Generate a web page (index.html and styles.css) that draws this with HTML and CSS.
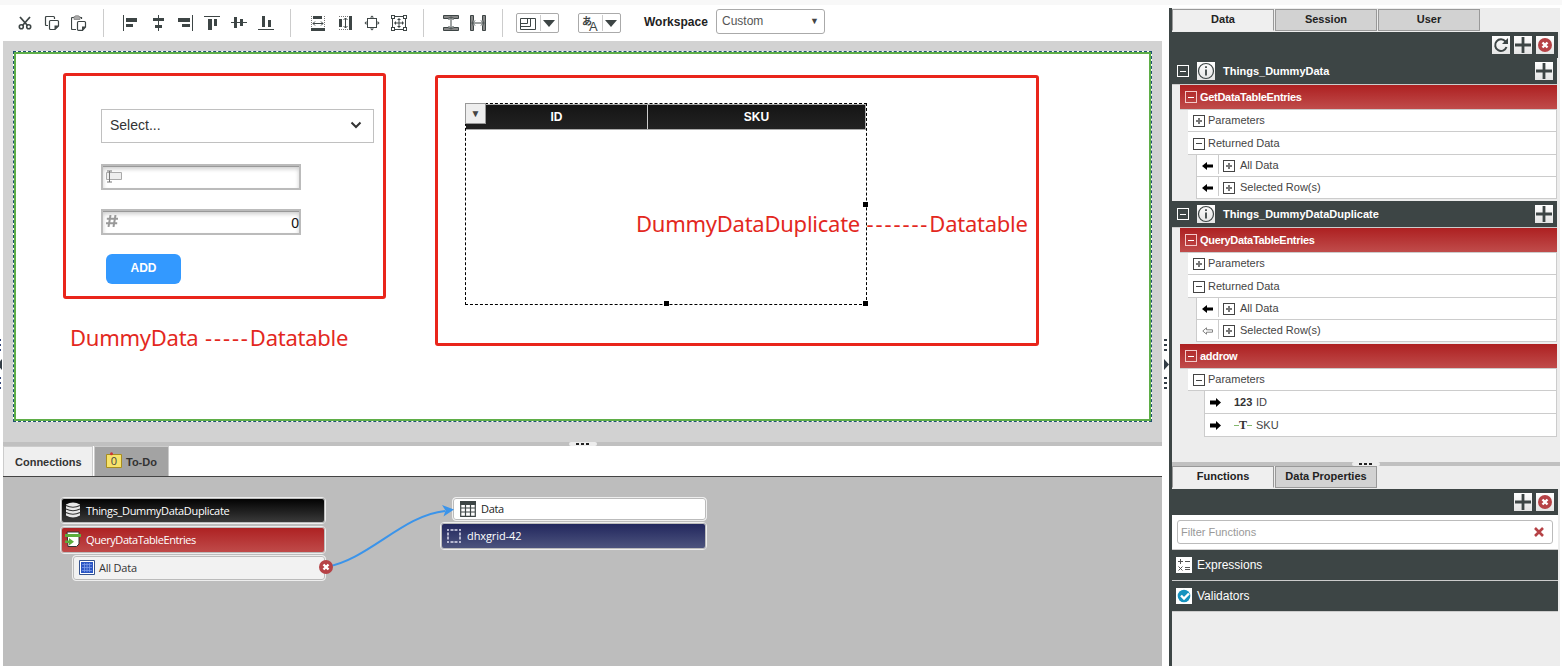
FILE: index.html
```
<!DOCTYPE html>
<html lang="en">
<head>
    <meta charset="UTF-8">
    <meta name="viewport" content="width=device-width, initial-scale=1.0">
    <title>Mashup Builder</title>
    <link rel="stylesheet" href="styles.css">
</head>
<body>
    <!-- shared icons -->
    <svg class="sprite" width="0" height="0">
        <symbol id="plus" viewBox="0 0 18 18"><path d="M9 1v16M1 9h16" stroke="#3d4545" stroke-width="2.800"/></symbol>
        <symbol id="close" viewBox="0 0 18 18"><circle cx="9" cy="9" r="7" fill="#b64246"/><path d="M6.500 6.500l5 5M11.500 6.500l-5 5" stroke="#fff" stroke-width="2.400"/></symbol>
        <symbol id="info" viewBox="0 0 18 18"><circle cx="9" cy="9" r="7.500" fill="none" stroke="#3d4545" stroke-width="1.200"/><path d="M9 7.500v6M9 4.200v1.800" stroke="#3d4545" stroke-width="1.800"/></symbol>
        <symbol id="arrow-left" viewBox="0 0 11 8"><path d="M0 4L5 0v2.500h6v3H5V8z"/></symbol>
        <symbol id="arrow-right" viewBox="0 0 11 9"><path d="M11 4.500L6 0v2.500H0v4h6V9z"/></symbol>
    </svg>

    <div class="top-strip"></div>
    <div class="builder">
        <div class="gutter left-gutter">
            <span class="dots"></span>
            <span class="arrow"></span>
            <span class="dots"></span>
        </div>

        <main class="main">
            <div class="toolbar">
                <div class="tools">
                    <svg class="tool" viewBox="0 0 16 16"><path d="M3 2l7.500 8.500M13 2L5.500 10.500" fill="none" stroke="#3d4545" stroke-width="1.800"/><circle cx="4.300" cy="11.700" r="2" fill="none" stroke="#3d4545" stroke-width="1.600"/><circle cx="11.700" cy="11.700" r="2" fill="none" stroke="#3d4545" stroke-width="1.600"/></svg>
                    <svg class="tool" viewBox="0 0 16 16"><path d="M4 10.500H2.500Q1.500 10.500 1.500 9.500V2.500Q1.500 1.500 2.500 1.500H9.500Q10.500 1.500 10.500 2.500V4M6.500 5.500H13.500Q14.500 5.500 14.500 6.500V11L11 14.500H6.500Q5.500 14.500 5.500 13.500V6.500Q5.500 5.500 6.500 5.500Z" fill="none" stroke="#3d4545" stroke-width="1.200"/><path d="M15 10.500L10.500 15V10.500z" fill="#3d4545"/></svg>
                    <svg class="tool" viewBox="0 0 16 16"><path d="M5 14.500H1.500Q.5 14.500 .5 13.500V3.500Q.5 2.500 1.500 2.500H3M9 2.500H10.500V4" fill="none" stroke="#3d4545" stroke-width="1.200"/><path d="M3 1.500h1.500V.7h3v.8H9v3H3z" fill="#aaa" stroke="#888" stroke-width=".8"/><path d="M7.500 6.500H13.500Q14.500 6.500 14.500 7.500V12L11.500 15.300H7.500Q6.500 15.300 6.500 14.500V7.500Q6.500 6.500 7.500 6.500Z" fill="#fff" stroke="#3d4545" stroke-width="1.200"/><path d="M15 11.500L11 15.700V11.500z" fill="#3d4545"/></svg>
                </div>
                <div class="tools">
                    <svg class="tool" viewBox="0 0 16 16"><path d="M0 0h1v16H0zM3 3h11v4H3zM3 9h7v3H3z"/></svg>
                    <svg class="tool" viewBox="0 0 16 16"><path d="M8 0h1v16H8zM3 3h11v3H3zM5 10h7v3H5z"/></svg>
                    <svg class="tool" viewBox="0 0 16 16"><path d="M15 0h1v16h-1zM1 3h12v4H1zM5 9h8v3H5z"/></svg>
                    <svg class="tool" viewBox="0 0 16 16"><path d="M0 1h16v1H0zM4 4h4v11H4zM10 4h3v7h-3z"/></svg>
                    <svg class="tool" viewBox="0 0 16 16"><path d="M0 7h16v1H0zM3 2h3v11H3zM9 4h3v7H9z"/></svg>
                    <svg class="tool" viewBox="0 0 16 16"><path d="M0 14h16v1H0zM4 1h3v11H4zM10 5h3v7h-3z"/></svg>
                </div>
                <div class="tools">
                    <svg class="tool" viewBox="0 0 16 16"><path d="M3 1h9v3H3zM1 13h14v3H1z"/><path d="M1.500 1v11M14.500 1v11" class="dotted"/><path d="M3 8.500h10M5 6.500L3 8.500L5 10.500M11 6.500L13 8.500L11 10.500" class="thin"/></svg>
                    <svg class="tool" viewBox="0 0 16 16"><path d="M2 4h3v8H2zM12 1h3v14h-3z"/><path d="M2 1.500h10M2 14.500h10" class="dotted"/><path d="M8.500 3v10M6.500 5L8.500 3L10.500 5M6.500 11L8.500 13L10.500 11" class="thin"/></svg>
                    <svg class="tool" viewBox="0 0 16 16"><rect x="3.500" y="3.500" width="9" height="9" class="thin"/><path d="M6 2.500L8 .5l2 2zM6 13.500l2 2l2-2zM2.500 6L.5 8l2 2zM13.500 6l2 2l-2 2z"/></svg>
                    <svg class="tool" viewBox="0 0 16 16"><rect x="1.500" y="1.500" width="13" height="13" class="thin"/><path d="M0 0h4v4H0zM12 0h4v4h-4zM0 12h4v4H0zM12 12h4v4h-4z"/><path d="M1 1h2v2H1zM13 1h2v2h-2zM1 13h2v2H1zM13 13h2v2h-2z" fill="#fff"/><path d="M3 8l2-2v1.500h2.500V5H6l2-2l2 2H8.500v2.500H11V6l2 2l-2 2V8.500H8.500V11H10l-2 2l-2-2h1.500V8.500H5V10z"/></svg>
                </div>
                <div class="tools">
                    <svg class="tool" viewBox="0 0 16 16"><path d="M.5.500h15v3h-4.500Q8 .5 5 3.500H.5zM.5 12.500H5Q8 15.500 11 12.500h4.500v3H.5z" fill="#888" stroke="#3d4545"/><path d="M8 3v10M5.500 5L8 2.500L10.500 5M5.500 11L8 13.500L10.500 11" class="thin"/></svg>
                    <svg class="tool" viewBox="0 0 16 16"><path d="M.5.500h3V5Q.5 8 3.500 11v4.500H.5zM12.500.5h3v15h-3V11Q15.500 8 12.500 5z" fill="#888" stroke="#3d4545"/><path d="M3 8h10M5 5.500L2.500 8L5 10.500M11 5.500L13.500 8L11 10.500" class="thin"/></svg>
                </div>
                <button class="split-button">
                    <svg width="23" height="18" viewBox="0 0 23 18"><path d="M3.500 4.500h15v11h-15zM3.500 9.500h7v-5M3.500 12.500h10v-8" fill="none" stroke="#3d4545"/></svg>
                    <span class="caret"></span>
                </button>
                <button class="split-button">
                    <span class="lang"><span class="lang-ja">あ</span><span class="lang-en">A</span></span>
                    <span class="caret"></span>
                </button>
                <span class="workspace-label">Workspace</span>
                <div class="workspace-select">Custom<span class="select-arrow">▼</span></div>
            </div>

            <div class="canvas">
                <div class="mashup">
                    <div class="widgets">
                        <div class="dropdown">Select...
                            <svg width="12" height="8" viewBox="0 0 12 8"><path d="M1.500 1.500L6 6l4.500-4.500" fill="none" stroke="#333" stroke-width="2"/></svg>
                        </div>
                        <div class="field">
                            <svg width="16" height="14" viewBox="0 0 16 14"><path d="M.5 2.500h15v7H.5z" fill="#eee" stroke="#aaa"/><path d="M1 1h5M3.500 1v11M1 12h5" stroke="#777" fill="none"/></svg>
                        </div>
                        <div class="field number-field">
                            <svg width="12" height="12" viewBox="0 0 12 12"><path d="M4.500 0L2.500 12M9.500 0L7.500 12M.8 3.800H12M0 8.200H11.200" stroke="#999" stroke-width="2" fill="none"/></svg>
                            <span>0</span>
                        </div>
                        <button class="add-button">ADD</button>
                    </div>
                    <div class="note note-left">DummyData <span class="dashes">-----</span>Datatable</div>

                    <div class="grid-frame">
                        <div class="grid">
                            <div class="grid-head"><span class="col-id">ID</span><span class="col-sku">SKU</span></div>
                            <span class="grid-menu">▼</span>
                            <i class="handle handle-e"></i>
                            <i class="handle handle-s"></i>
                            <i class="handle handle-se"></i>
                        </div>
                    </div>
                    <div class="note note-right">DummyDataDuplicate <span class="dashes">-------</span>Datatable</div>
                </div>
            </div>

            <div class="splitter"><span class="grip"></span></div>
            <div class="tabs">
                <span class="tab active">Connections</span>
                <span class="tab todo">
                    <svg width="16" height="17" viewBox="0 0 16 17"><path d="M.5 2.500h15v13H.5z" fill="#f7e36b" stroke="#a88d20"/><circle cx="5.500" cy="1.800" r="1.500" fill="#c33"/><text x="8" y="13" text-anchor="middle" class="todo-count">0</text></svg>
                    To-Do
                </span>
            </div>

            <div class="diagram">
                <svg class="wire" width="160" height="80" viewBox="0 0 160 80">
                    <path d="M11 67C53 60 88 15 130 11" fill="none" stroke="#3b94ea" stroke-width="2"/>
                    <path d="M139 9.500L127 5l3.500 5.500L128.500 16.500z" fill="#3b94ea"/>
                </svg>
                <div class="node node-thing">
                    <svg width="16" height="16" viewBox="0 0 16 16"><path d="M1 2.500Q8-1.500 15 2.500V13.500Q8 17.500 1 13.500z" fill="#e8e8e8"/><path d="M1 3.500q7 3.500 14 0M1 7q7 3.500 14 0M1 10.500q7 3.500 14 0" fill="none" stroke="#333" stroke-width="1.200"/></svg>
                    Things_DummyDataDuplicate
                </div>
                <div class="node node-service">
                    <svg width="16" height="16" viewBox="0 0 16 16"><path d="M2 1h12v12l-2.500 2.500H3z" fill="#fff" stroke="#333"/><path d="M0 3h16v3H0zM0 9.500h4V7l5 3.800l-5 3.800v-2.500H0z" fill="#5cad3c"/></svg>
                    QueryDataTableEntries
                </div>
                <div class="node node-result">
                    <svg width="16" height="15" viewBox="0 0 16 15"><path d="M.5.500h15v14H.5z" fill="#fff" stroke="#35538f"/><path d="M2 2h12v11H2z" fill="#2b56c4"/><path d="M3 4.500h10M3 7.500h10M3 10.500h10M5.500 3v9M8 3v9M10.500 3v9" stroke="#7d9ce8" stroke-width=".8"/></svg>
                    All Data
                </div>
                <svg class="unlink" width="18" height="18"><use href="#close"/></svg>
                <div class="node node-data">
                    <svg width="16" height="16" viewBox="0 0 16 16"><path d="M.7.700h14.600v14.600H.7zM.7 7h14.600M.7 11h14.600M5.500 3v12.500M10.500 3v12.500" fill="none" stroke="#3d4545" stroke-width="1.200"/><path d="M0 0h16v4H0z" fill="#3d4545"/></svg>
                    Data
                </div>
                <div class="node node-widget">
                    <svg width="14" height="14" viewBox="0 0 14 14"><path d="M3.500 1h3M7.500 1h3M3.500 13h3M7.500 13h3M1 3.500v3M1 7.500v3M13 3.500v3M13 7.500v3M0 1h2M12 1h2M0 13h2M12 13h2" stroke="#dde" stroke-width="1.500"/></svg>
                    dhxgrid-42
                </div>
            </div>
        </main>

        <div class="gutter">
            <span class="dots"></span>
            <span class="arrow"></span>
            <span class="dots"></span>
        </div>

        <aside class="panel">
            <div class="panel-tabs">
                <span class="panel-tab active">Data</span>
                <span class="panel-tab">Session</span>
                <span class="panel-tab">User</span>
            </div>
            <div class="panel-bar">
                <svg class="bar-icon" viewBox="0 0 18 18"><path d="M13.500 5.500A5.800 5.800 0 1 0 14.500 11" fill="none" stroke="#3d4545" stroke-width="2"/><path d="M16 2v6h-6z" fill="#3d4545"/></svg>
                <svg class="bar-icon"><use href="#plus"/></svg>
                <svg class="bar-icon"><use href="#close"/></svg>
            </div>

            <div class="tree">
                <div class="entity">
                    <i class="toggle minus"></i>
                    <svg class="bar-icon"><use href="#info"/></svg>
                    <b>Things_DummyData</b>
                    <svg class="bar-icon add"><use href="#plus"/></svg>
                </div>
                <div class="service"><i class="toggle minus"></i>GetDataTableEntries</div>
                <div class="row"><i class="toggle plus"></i>Parameters</div>
                <div class="row tall"><i class="toggle minus"></i>Returned Data</div>
                <div class="row leaf"><span class="bind"><svg width="11" height="8"><use href="#arrow-left"/></svg></span><i class="toggle plus"></i>All Data</div>
                <div class="row leaf"><span class="bind"><svg width="11" height="8"><use href="#arrow-left"/></svg></span><i class="toggle plus"></i>Selected Row(s)</div>

                <div class="entity spaced">
                    <i class="toggle minus"></i>
                    <svg class="bar-icon"><use href="#info"/></svg>
                    <b>Things_DummyDataDuplicate</b>
                    <svg class="bar-icon add"><use href="#plus"/></svg>
                </div>
                <div class="service"><i class="toggle minus"></i>QueryDataTableEntries</div>
                <div class="row"><i class="toggle plus"></i>Parameters</div>
                <div class="row tall"><i class="toggle minus"></i>Returned Data</div>
                <div class="row leaf"><span class="bind"><svg width="11" height="8"><use href="#arrow-left"/></svg></span><i class="toggle plus"></i>All Data</div>
                <div class="row leaf"><span class="bind"><svg width="11" height="8" viewBox="0 0 11 8"><path d="M.8 4L4.500 .8v2h6v2.400h-6v2z" fill="#fff" stroke="#777" stroke-width=".9"/></svg></span><i class="toggle plus"></i>Selected Row(s)</div>

                <div class="service spaced"><i class="toggle minus"></i>addrow</div>
                <div class="row"><i class="toggle minus"></i>Parameters</div>
                <div class="row tall param"><svg width="11" height="9"><use href="#arrow-right"/></svg><b class="type">123</b>ID</div>
                <div class="row tall param"><svg width="11" height="9"><use href="#arrow-right"/></svg><b class="type type-text">T</b>SKU</div>
            </div>

            <div class="splitter"><span class="grip"></span></div>
            <div class="panel-tabs lower">
                <span class="panel-tab active">Functions</span>
                <span class="panel-tab">Data Properties</span>
            </div>
            <div class="panel-bar">
                <svg class="bar-icon"><use href="#plus"/></svg>
                <svg class="bar-icon"><use href="#close"/></svg>
            </div>
            <div class="filter">
                <div class="filter-input">Filter Functions
                    <svg width="10" height="10" viewBox="0 0 10 10"><path d="M1 1l8 8M9 1L1 9" stroke="#b64246" stroke-width="2.600"/></svg>
                </div>
            </div>
            <div class="function">
                <svg width="16" height="16" viewBox="0 0 16 16"><path d="M0 0h16v16H0z" fill="#fff"/><path d="M2 4.500h5M4.500 2v5M9 4.500h5M9 10.500h5M9 12.500h5M2.500 9.500l4 4M6.500 9.500l-4 4" stroke="#555" fill="none"/></svg>
                Expressions
            </div>
            <div class="function">
                <svg width="16" height="16" viewBox="0 0 16 16"><path d="M0 0h16v16H0z" fill="#fff"/><circle cx="8" cy="8" r="6.300" fill="#1593bf"/><path d="M5 7.500l3 3l5-5" fill="none" stroke="#fff" stroke-width="2.400"/></svg>
                Validators
            </div>
        </aside>
    </div>
</body>
</html>
```
FILE: styles.css
```
* {
    box-sizing: border-box;
}

body {
    margin: 0;
    height: 666px;
    overflow: hidden;
    background: #fff;
    font-family: "Liberation Sans", Arial, sans-serif;
    font-size: 11px;
    color: #333;
}

svg {
    display: block;
    flex-shrink: 0;
}

.top-strip {
    height: 5px;
    background: #f8f8f8;
}

.builder {
    display: flex;
    height: 661px;
}

/* side gutters */
.gutter {
    width: 7px;
    flex-shrink: 0;
    padding: 334px 0 0 2px;
}

.left-gutter {
    width: 3px;
    padding-left: 0;
}

.dots {
    display: block;
    width: 3px;
    height: 13px;
    background: repeating-linear-gradient(#333d46 0, #333d46 2px, transparent 2px, transparent 5px);
}

.left-gutter .dots {
    width: 1px;
    background: repeating-linear-gradient(#35467a 0, #35467a 2px, transparent 2px, transparent 5px);
}

.arrow {
    display: block;
    width: 5px;
    height: 11px;
    margin: 7px 0;
    background: #333d46;
    clip-path: polygon(0 0, 100% 50%, 0 100%);
}

.left-gutter .arrow {
    width: 2px;
    clip-path: polygon(0 20%, 100% 0, 100% 100%, 0 80%);
}

.main {
    width: 1159px;
    display: flex;
    flex-direction: column;
}

/* toolbar */
.toolbar {
    height: 36px;
    padding-left: 14px;
    display: flex;
    align-items: center;
}

.tools {
    display: flex;
    align-items: center;
    gap: 11px;
    height: 28px;
    padding-right: 16px;
    margin-right: 19px;
    border-right: 1px solid #ccc;
}

.tools:nth-child(4) {
    margin-right: 13px;
}

.tool {
    width: 16px;
    height: 16px;
    fill: #3d4545;
}

.thin {
    fill: none;
    stroke: #3d4545;
    stroke-width: 1;
}

.dotted {
    fill: none;
    stroke: #777;
    stroke-dasharray: 1 1;
}

.split-button {
    display: flex;
    align-items: center;
    width: 43px;
    height: 20px;
    margin: 0 19px 0 0;
    padding: 0;
    background: #fff;
    border: 1px solid #aaa;
    border-radius: 2px;
}

.caret {
    width: 18px;
    height: 16px;
    border-left: 1px solid #ccc;
}

.caret::before {
    content: "";
    display: block;
    width: 12px;
    height: 7px;
    margin: 5px 0 0 2px;
    background: #3d4545;
    clip-path: polygon(0 0, 100% 0, 50% 100%);
}

.lang {
    display: flex;
    width: 23px;
    height: 18px;
    padding-left: 3px;
    font-family: "Liberation Sans", "Noto Sans CJK JP", sans-serif;
    color: #3d4545;
    line-height: 11px;
}

.lang-ja {
    font-size: 10px;
    font-weight: bold;
    padding-top: 2px;
}

.lang-en {
    font-size: 13px;
    margin-left: -3px;
    padding-top: 7px;
}

.workspace-label {
    margin-left: 4px;
    width: 72px;
    padding-bottom: 3px;
    font-size: 12px;
    font-weight: bold;
    color: #222;
}

.workspace-select {
    display: flex;
    align-items: center;
    justify-content: space-between;
    width: 109px;
    height: 25px;
    margin-top: -3px;
    padding: 0 5px 2px;
    border: 1px solid #aaa;
    border-radius: 3px;
    font-size: 12px;
    color: #555;
}

.select-arrow {
    font-size: 9px;
    line-height: 12px;
    color: #444;
}

/* design canvas */
.canvas {
    height: 401px;
    padding: 10px;
    background: #d2d2d2;
}

.mashup {
    position: relative;
    width: 1139px;
    height: 371px;
    background: #fff;
    border: 1px dashed #1f5570;
    box-shadow: inset 0 0 0 2px #5fae48;
}

.widgets {
    position: absolute;
    left: 49px;
    top: 21px;
    width: 323px;
    height: 226px;
    padding: 33px 0 0 35px;
    border: 3px solid #e9251b;
    border-radius: 3px;
}

.dropdown {
    display: flex;
    align-items: center;
    justify-content: space-between;
    width: 273px;
    height: 34px;
    padding: 0 11px 2px 8px;
    border: 1px solid #c0c0c0;
    font-size: 14px;
}

.field {
    display: flex;
    justify-content: space-between;
    width: 200px;
    height: 26px;
    margin-top: 21px;
    padding: 4px 3px;
    border: 2px solid #bbb;
    box-shadow: inset 0 1px 0 #999, inset 0 3px 4px #ccc;
}

.number-field {
    margin-top: 19px;
    padding: 4px 0 0 3px;
    font-size: 14px;
    color: #111;
}

.add-button {
    display: block;
    width: 75px;
    height: 30px;
    margin: 19px 0 0 5px;
    padding: 0 0 2px;
    background: #3399ff;
    border: 0;
    border-radius: 6px;
    font: bold 12px "Liberation Sans", Arial, sans-serif;
    color: #fff;
}

.note {
    position: absolute;
    font-family: "Noto Sans", sans-serif;
    font-size: 22px;
    line-height: 30px;
    letter-spacing: -0.25px;
    white-space: nowrap;
    color: #e3281e;
}

.dashes {
    margin-left: 1px;
    letter-spacing: 1.9px;
}

.note-left {
    left: 56px;
    top: 270px;
}

.note-right {
    left: 622px;
    top: 156px;
}

.grid-frame {
    position: absolute;
    left: 421px;
    top: 23px;
    width: 604px;
    height: 271px;
    padding: 25px 27px;
    border: 3px solid #e9251b;
    border-radius: 3px;
}

.grid {
    position: relative;
    width: 402px;
    height: 202px;
    border: 1px dashed #000;
}

.grid-head {
    display: flex;
    height: 26px;
    line-height: 25px;
    background: linear-gradient(#151515, #222);
    border: 1px solid #aaa;
    border-width: 1px 1px 1px 0;
    color: #fff;
    font-size: 12px;
    font-weight: bold;
    text-align: center;
}

.col-id {
    width: 182px;
    border-right: 1px solid #ccc;
}

.col-sku {
    flex: 1;
}

.grid-menu {
    position: absolute;
    left: -1px;
    top: -1px;
    width: 21px;
    height: 21px;
    line-height: 19px;
    background: #eee;
    border: 1px solid #999;
    font-size: 10px;
    text-align: center;
    color: #444;
}

.handle {
    position: absolute;
    width: 5px;
    height: 5px;
    background: #000;
}

.handle-e {
    right: -2px;
    top: 98px;
}

.handle-s {
    left: 198px;
    bottom: -2px;
}

.handle-se {
    right: -2px;
    bottom: -2px;
}

.splitter {
    display: flex;
    justify-content: center;
    height: 4px;
    flex-shrink: 0;
    background: #c0c0c0;
}

.grip {
    width: 28px;
    height: 4px;
    padding: 1px 7px;
    background: #ededed;
    border-radius: 2px;
}

.grip::before {
    content: "";
    display: block;
    width: 13px;
    height: 2px;
    background: repeating-linear-gradient(90deg, #222 0, #222 3px, transparent 3px, transparent 5px);
}

/* connections */
.tabs {
    display: flex;
    gap: 1px;
    height: 31px;
    border-bottom: 1px solid #444;
}

.tab {
    display: flex;
    align-items: center;
    width: 90px;
    padding: 1px 0 0 11px;
    background: #efefef;
    border: 1px solid #ccc;
    border-bottom: 0;
    font-weight: bold;
}

.todo {
    width: 75px;
    gap: 4px;
    padding-left: 11px;
    background: #a3a3a3;
}

.todo svg {
    margin-top: -3px;
}

.todo-count {
    font: 11px "Open Sans", sans-serif;
    fill: #444;
}

.diagram {
    position: relative;
    flex: 1;
    background: #bdbdbd;
    font-family: "Open Sans", "Noto Sans", sans-serif;
}

.wire {
    position: absolute;
    left: 312px;
    top: 23px;
    z-index: 1;
}

.unlink {
    position: absolute;
    left: 314px;
    top: 81px;
    z-index: 2;
}

.node {
    position: absolute;
    left: 57px;
    width: 266px;
    height: 27px;
    padding: 0 0 1px 4px;
    display: flex;
    align-items: center;
    gap: 5px;
    border: 1px solid #eee;
    border-radius: 4px;
    box-shadow: inset 0 0 0 1px #bbb;
    letter-spacing: -0.33px;
    color: #fff;
}

.node-thing {
    top: 20px;
    background: linear-gradient(#000, #3c3c3c);
}

.node-service {
    top: 49px;
    height: 28px;
    padding-bottom: 2px;
    background: linear-gradient(#ad2021, #c04c4b);
    letter-spacing: -0.43px;
}

.node-result {
    left: 69px;
    top: 78px;
    width: 254px;
    height: 26px;
    padding-left: 6px;
    gap: 4px;
    background: #f2f2f2;
    letter-spacing: -0.2px;
    color: #333;
}

.node-data {
    left: 449px;
    top: 20px;
    width: 255px;
    height: 24px;
    padding-left: 7px;
    background: #fff;
    color: #222;
}

.node-widget {
    left: 437px;
    top: 45px;
    width: 267px;
    height: 28px;
    padding-left: 6px;
    gap: 6px;
    background: linear-gradient(#20255c, #4e557f);
    letter-spacing: -0.1px;
}

/* right panel */
.panel {
    width: 391px;
    height: 658px;
    margin-top: 3px;
    background: #ededed;
    border-left: 3px solid #3d4545;
}

.panel-tabs {
    display: flex;
    gap: 1px;
    height: 24px;
    padding-top: 1px;
}

.panel-tabs.lower {
    height: 23px;
    padding-top: 0;
}

.panel-tab {
    width: 102px;
    height: 22px;
    line-height: 19px;
    background: #d2d2d2;
    border: 1px solid #999;
    font-weight: bold;
    text-align: center;
    color: #222;
}

.panel-tab.active {
    background: #efefef;
    border-bottom-color: #efefef;
}

.panel-bar {
    display: flex;
    align-items: center;
    justify-content: flex-end;
    gap: 4px;
    width: 386px;
    height: 26px;
    padding-right: 4px;
    background: #3d4545;
}

.bar-icon {
    width: 18px;
    height: 18px;
    background: linear-gradient(#fff, #e4e4e4);
}

.tree {
    height: 404px;
    width: 386px;
    padding-right: 1px;
}

.entity {
    display: flex;
    align-items: center;
    height: 27px;
    padding: 0 4px 0 5px;
    background: #3d4545;
    border-bottom: 1px solid #ccc;
    color: #fff;
}

.entity .bar-icon {
    margin: 0 8px;
}

.entity .add {
    margin: 0 0 0 auto;
}

.spaced {
    margin-top: 2px;
}

.service {
    display: flex;
    align-items: center;
    height: 25px;
    margin-left: 8px;
    padding-left: 5px;
    background: linear-gradient(#ad2021, #c04c4b);
    border-bottom: 1px solid #ccc;
    font-weight: bold;
    letter-spacing: -0.3px;
    color: #fff;
}

.row {
    display: flex;
    align-items: center;
    height: 22px;
    margin-left: 16px;
    padding: 0 0 1px 5px;
    background: #fff;
    border-right: 1px solid #ccc;
    border-bottom: 1px solid #ccc;
    color: #444;
}

.tall {
    height: 23px;
}

.leaf {
    margin-left: 24px;
    padding: 0 0 2px;
    border-left: 1px solid #ccc;
}

.bind {
    display: flex;
    align-items: center;
    width: 22px;
    height: 19px;
    padding: 2px 0 0 5px;
    margin-right: 4px;
    border-right: 1px solid #ccc;
}

.bind svg,
.param svg {
    color: #000;
    fill: #000;
}

.param {
    margin-left: 32px;
    border-left: 1px solid #ccc;
}

.param svg {
    margin-top: 1px;
}

.type {
    width: 18px;
    margin: 1px 4px 0 13px;
    text-align: center;
    color: #333;
}

.type-text {
    font-family: "Liberation Serif", serif;
    font-size: 12px;
    background: linear-gradient(#84b86d, #84b86d) 0 55% / 5px 1px no-repeat,
        linear-gradient(#84b86d, #84b86d) 100% 55% / 5px 1px no-repeat;
}

.toggle {
    flex-shrink: 0;
    width: 12px;
    height: 12px;
    margin-right: 3px;
    border: 1px solid currentColor;
    background: linear-gradient(currentColor, currentColor) 50% 50% / 6px 1px no-repeat;
}

.row .toggle {
    margin-top: 2px;
}

.service .toggle {
    border-color: #f3c9c9;
}

.entity .toggle {
    margin-right: 0;
}

.leaf .toggle {
    margin-right: 5px;
}

.plus {
    background: linear-gradient(#777, #777) 50% 50% / 6px 2px no-repeat,
        linear-gradient(#777, #777) 50% 50% / 2px 6px no-repeat;
}

.filter {
    width: 386px;
    height: 35px;
    padding: 5px;
    background: #fff;
    border-bottom: 1px solid #ccc;
}

.filter-input {
    display: flex;
    align-items: center;
    justify-content: space-between;
    height: 24px;
    padding: 0 8px 1px 3px;
    border: 1px solid #bbb;
    border-radius: 3px;
    color: #999;
}

.function {
    display: flex;
    align-items: center;
    gap: 5px;
    width: 386px;
    height: 31px;
    padding: 0 0 1px 4px;
    background: #3d4545;
    border-bottom: 1px solid #ccc;
    font-size: 12px;
    color: #fff;
}
```
